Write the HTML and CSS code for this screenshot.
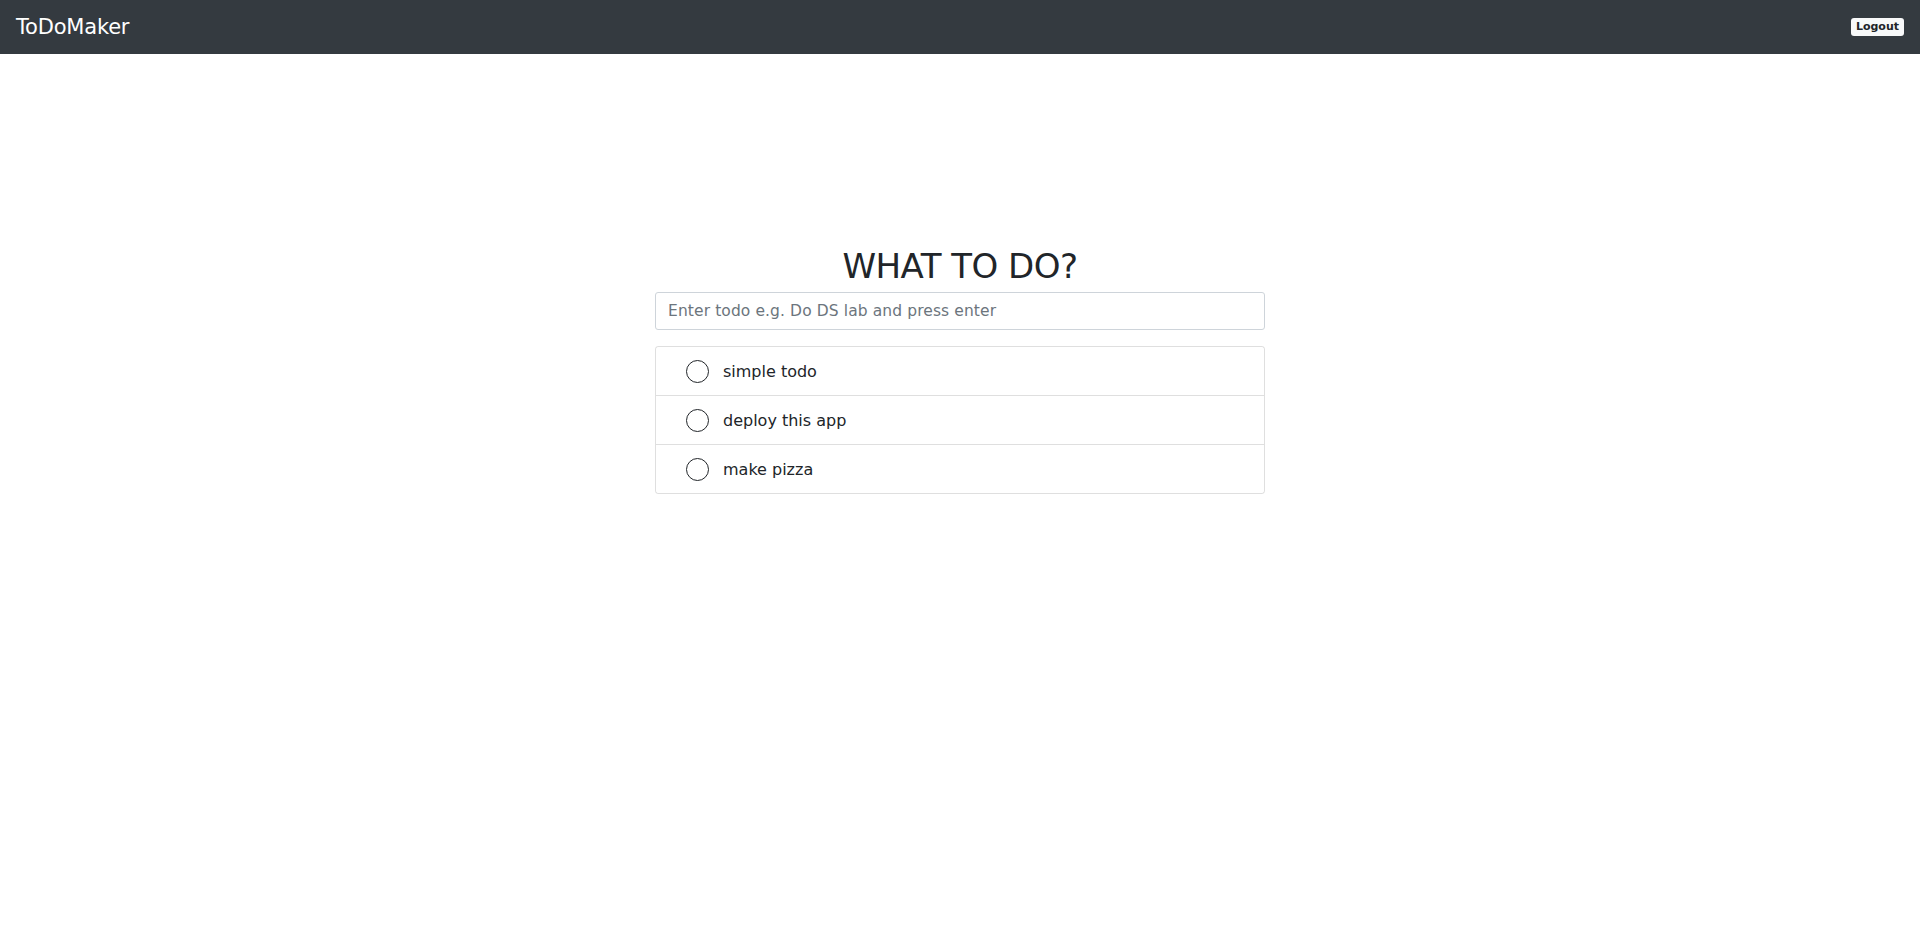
FILE: index.html
```html
<!DOCTYPE html>
<html lang="en">
<head>
<meta charset="utf-8">
<title>ToDoMaker</title>
<link rel="stylesheet" href="styles.css">
</head>
<body>
<nav class="navbar">
  <a class="brand" href="#">ToDoMaker</a>
  <button class="logout">Logout</button>
</nav>
<main class="main">
  <section class="todo">
    <h1 class="title">WHAT TO DO?</h1>
    <input class="todo-input" type="text" placeholder="Enter todo e.g. Do DS lab and press enter">
    <ul class="todo-list">
      <li class="todo-item"><span class="check"></span><span class="label">simple todo</span></li>
      <li class="todo-item"><span class="check"></span><span class="label">deploy this app</span></li>
      <li class="todo-item"><span class="check"></span><span class="label">make pizza</span></li>
    </ul>
  </section>
</main>
</body>
</html>
```
FILE: styles.css
```css
* { box-sizing: border-box; }
html, body { margin: 0; padding: 0; background: #fff; }
body {
  font-family: "DejaVu Sans", "Noto Sans", sans-serif;
  color: #212529;
}
.navbar {
  height: 54px;
  background: #343a40;
  display: flex;
  align-items: center;
  justify-content: space-between;
  padding: 0 16px;
}
.brand {
  color: #fff;
  text-decoration: none;
  font-size: 21px;
  letter-spacing: -0.2px;
}
.logout {
  background: #f8f9fa;
  color: #212529;
  border: none;
  border-radius: 3px;
  font-family: inherit;
  font-size: 11px;
  font-weight: 600;
  height: 18px;
  padding: 0 5px;
  line-height: 18px;
}
.main {
  display: flex;
  justify-content: center;
  padding-top: 190px;
}
.todo {
  width: 610px;
}
.title {
  margin: 0 0 3px;
  text-align: center;
  font-size: 34px;
  font-weight: 400;
  line-height: 45px;
  color: #212529;
  letter-spacing: -0.5px;
}
.todo-input {
  display: block;
  width: 100%;
  height: 38px;
  border: 1px solid #ced4da;
  border-radius: 3px;
  padding: 6px 12px;
  font-family: inherit;
  font-size: 15.5px;
  letter-spacing: 0.1px;
  color: #495057;
}
.todo-input::placeholder { color: #6c757d; }
.todo-list {
  list-style: none;
  margin: 16px 0 0;
  padding: 0;
  border: 1px solid rgba(0,0,0,.125);
  border-radius: 3px;
}
.todo-item {
  display: flex;
  align-items: center;
  height: 49px;
  padding: 0 0 0 30px;
  border-top: 1px solid rgba(0,0,0,.125);
  font-size: 16px;
  color: #212529;
}
.todo-item:first-child { border-top: none; height: 48px; }
.check {
  width: 23px;
  height: 23px;
  border: 1.3px solid #212529;
  border-radius: 50%;
  margin-right: 14px;
  flex: none;
}
```
